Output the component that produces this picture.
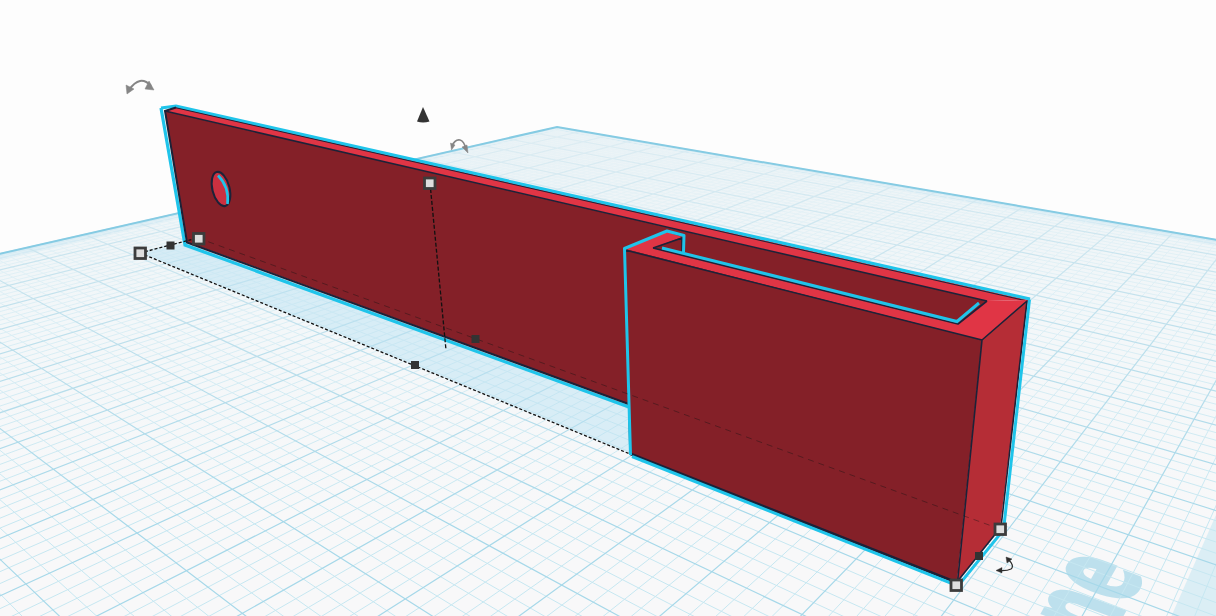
const DA = 0.01966;
const DB = 0.02605;
const A_MAX = DA * 20;
const B_MAX = DB * 20;

// workplane cell coords to screen, from the two vanishing points
const project = (a: number, b: number) => {
  const w = 1 - a - b;
  return [(557 + 671 * a - 1480 * b) / w, (127 + 83 * a + 83 * b) / w];
};

const pt = (a: number, b: number) => project(a, b).map((n) => n.toFixed(1)).join(",");

const gridPath = (major: boolean) => {
  let d = "";
  for (let i = 0; i <= 100; i++) {
    if ((i % 5 === 0) !== major) continue;
    const a = (i / 5) * DA;
    const b = (i / 5) * DB;
    d += `M${pt(a, 0)}L${pt(a, B_MAX)}M${pt(0, b)}L${pt(A_MAX, b)}`;
  }
  return d;
};

const band = (a0: number, b0: number, a1: number, b1: number) =>
  [pt(a0, b0), pt(a1, b0), pt(a1, b1), pt(a0, b1)].join(" ");

const handles = [
  [140, 253],
  [198.5, 238.5],
  [429.5, 183],
  [1000, 529],
  [956, 585],
];

const nubs = [
  [170.5, 245.5],
  [475.5, 339],
  [415, 365],
  [979, 556],
];

const FACE = "#842028";
const TOP = "#e03545";
const SIDE = "#b52d36";
const CYAN = "#1fc4ea";
const INK = "#1c2238";

const App = () => {
  return (
    <div className="h-[616px] w-[1216px] overflow-hidden bg-[#fdfdfd]">
      <svg width="1216" height="616" viewBox="0 0 1216 616" className="block">
        <defs>
          <linearGradient id="plate" gradientUnits="userSpaceOnUse" x1="0" y1="127" x2="0" y2="520">
            <stop offset="0" stopColor="#ebf3f6" />
            <stop offset="0.5" stopColor="#f3f7f9" />
            <stop offset="1" stopColor="#f8f8f9" />
          </linearGradient>
          <linearGradient id="minor" gradientUnits="userSpaceOnUse" x1="0" y1="150" x2="0" y2="520">
            <stop offset="0" stopColor="#e8f2f6" />
            <stop offset="0.4" stopColor="#deeff5" />
            <stop offset="1" stopColor="#c6e7f1" />
          </linearGradient>
          <linearGradient id="major" gradientUnits="userSpaceOnUse" x1="0" y1="130" x2="0" y2="520">
            <stop offset="0" stopColor="#deedf3" />
            <stop offset="0.5" stopColor="#bfe0ec" />
            <stop offset="1" stopColor="#a6d8e9" />
          </linearGradient>
        </defs>

        {/* workplane */}
        <polygon points={band(0, 0, A_MAX, B_MAX)} fill="url(#plate)" />
        <text
          transform="matrix(0.31,-0.55,1.21,0.45,1145,574)"
          textAnchor="end"
          fontFamily="'Open Sans', 'Liberation Sans', sans-serif"
          fontWeight="700"
          fontSize="100"
          fill="#bde0ed"
          stroke="#bde0ed"
          strokeWidth="3"
        >
          ne
        </text>
        <polygon points={band(0.386, 0, A_MAX, B_MAX)} fill="#cfe9f3" opacity="0.7" />
        <polygon points={band(0, 0, A_MAX, 0.009)} fill="#cfe9f3" opacity="0.8" />
        <polygon points={band(0, 0, 0.007, B_MAX)} fill="#cfe9f3" opacity="0.8" />
        <path d={gridPath(false)} fill="none" stroke="url(#minor)" strokeWidth="1" />
        <path d={gridPath(true)} fill="none" stroke="url(#major)" strokeWidth="1.2" />
        <polygon points={band(0, 0, A_MAX, B_MAX)} fill="none" stroke="#85cbe3" strokeWidth="2" />

        {/* shadow */}
        <polygon points="140,253 186,243 630,405 630,454" fill="#b5e0f2" opacity="0.45" />

        {/* back wall */}
        <polygon points="165,111 987,301 958,324 640,408 187,242" fill={FACE} />
        <polygon points="165,111 176,107 1029,300 987,301" fill={TOP} />

        {/* hole */}
        <g>
          <ellipse cx="221" cy="189" rx="8.6" ry="17.5" transform="rotate(-14 221 189)" fill="#cb3040" stroke={INK} strokeWidth="2" />
          <path d="M218 175.5Q229.5 187 227.5 204" fill="none" stroke={CYAN} strokeWidth="2.6" />
        </g>

        {/* wall lines */}
        <path d="M161 108L176 106L1030 299" fill="none" stroke={CYAN} strokeWidth="3.2" />
        <path d="M161 108L185 245L629 407" fill="none" stroke={CYAN} strokeWidth="3.2" />
        <path d="M176 107.5L165 111L187 242.5L630 404.5" fill="none" stroke={INK} strokeWidth="2" />
        <path d="M165 111L987 301" fill="none" stroke={INK} strokeWidth="1.6" />
        <path d="M176 107.8L1027 301" fill="none" stroke={INK} strokeWidth="1" />

        {/* front box */}
        <polygon points="625,249 667,232 682,237 653,248 958,323 987,301 1029,300 982,340" fill={TOP} />
        <polygon points="625,249 982,340 957,582 630,453" fill={FACE} />
        <polygon points="982,340 1028,300 1000,528 957,582" fill={SIDE} />
        <path
          d="M625 250L982 340L957.5 582M982 340L1027 301L1001 527L957 582L630 453L625 250M653 248L682 238L682 252M653 248L958 324L987 301"
          fill="none"
          stroke={INK}
          strokeWidth="1.6"
          strokeLinejoin="round"
        />
        <path d="M630 454L957 583" fill="none" stroke={INK} strokeWidth="2.2" />
        <path d="M632 456.5L958 586L1003.5 530L1029.5 299.5" fill="none" stroke={CYAN} strokeWidth="3" />
        <path d="M630.5 455L624.5 248.5L667 231L684 235.5L683.5 252" fill="none" stroke={CYAN} strokeWidth="3" strokeLinejoin="round" />
        <path d="M662 248L957 321.5L979 303" fill="none" stroke={CYAN} strokeWidth="3" />

        {/* ruler dashes */}
        <path d="M140 253L198 238M140 253L630 454" fill="none" stroke="#111" strokeWidth="1.3" strokeDasharray="3 2" />
        <path d="M430 183L446 350" fill="none" stroke="#111" strokeWidth="1.3" strokeDasharray="4 2" />
        <path d="M198 238L1000 529" fill="none" stroke="#111" strokeWidth="0.8" strokeDasharray="6 5" opacity="0.5" />

        {/* rotate arrows */}
        <g fill="#858585" stroke="#858585">
          <path d="M129 90Q140 74 151 86" fill="none" strokeWidth="2" />
          <polygon points="127,94 126,85 134,89" strokeWidth="0.5" />
          <polygon points="154,90 145,89 149,81" strokeWidth="0.5" />
          <path d="M452 146Q455 139 460 140Q464 141 466 149" fill="none" strokeWidth="1.6" />
          <polygon points="451.5,150 450.5,143 455,145" strokeWidth="0.5" />
          <polygon points="468,153 462,147 467,145" strokeWidth="0.5" />
        </g>
        <g fill="#2d2d2d" stroke="#2d2d2d">
          <path d="M1008 559Q1015 566 1011 569Q1007 571 1000 570.5" fill="none" strokeWidth="1.2" />
          <polygon points="1006,557 1012,559 1007,563" strokeWidth="0.4" />
          <polygon points="996,570.5 1002,567.5 1002,573" strokeWidth="0.4" />
        </g>

        {/* height cone */}
        <path d="M423 107L417 121.5Q423 123.5 429.5 121.5Z" fill="#333" />

        {/* handles */}
        {nubs.map(([x, y]) => (
          <rect key={`${x}-${y}`} x={x - 4} y={y - 4} width="8" height="8" fill="#333" />
        ))}
        {handles.map(([x, y]) => (
          <rect key={`${x}-${y}`} x={x - 5} y={y - 5} width="10.5" height="10.5" fill="#dedede" stroke="#3c3c3c" strokeWidth="2.8" />
        ))}
      </svg>
    </div>
  );
};

export default App;
